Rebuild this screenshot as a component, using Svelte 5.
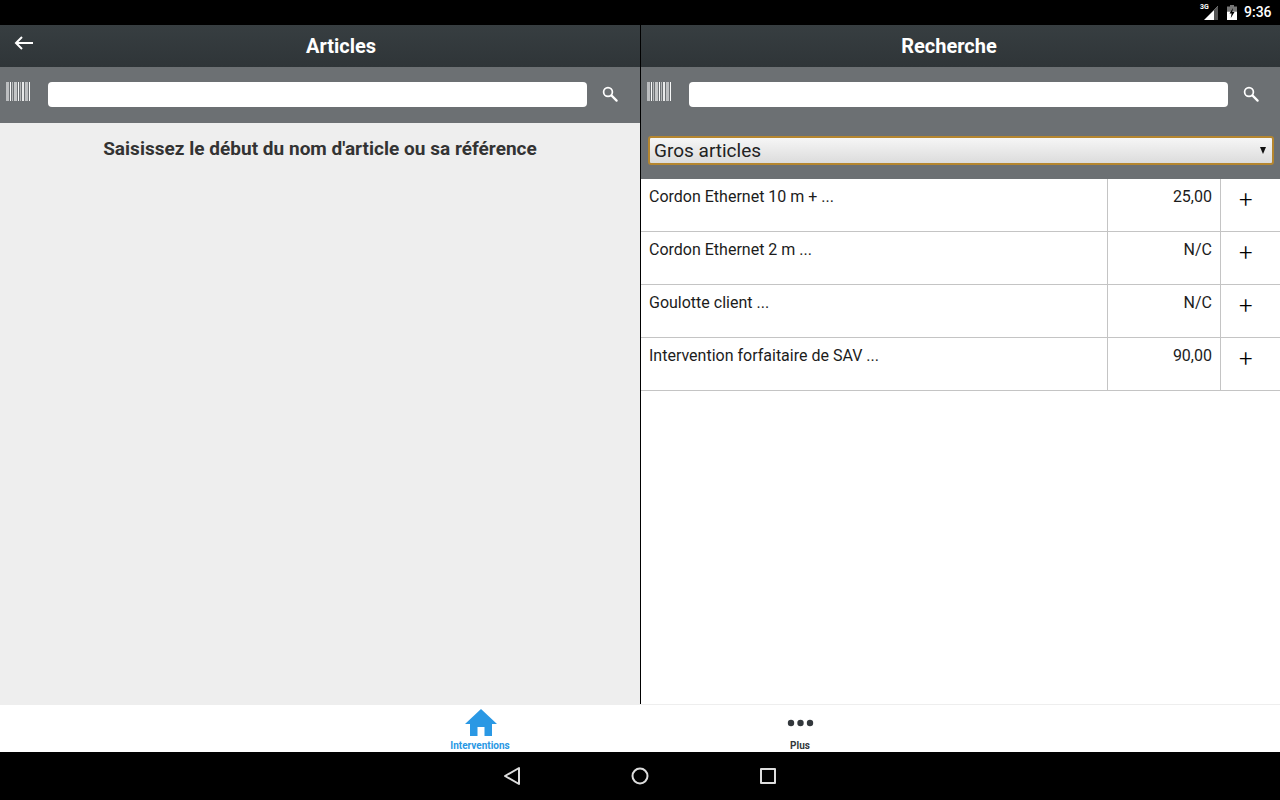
<script>
  const rows = [
    { name: 'Cordon Ethernet 10 m + ...', price: '25,00' },
    { name: 'Cordon Ethernet 2 m ...', price: 'N/C' },
    { name: 'Goulotte client ...', price: 'N/C' },
    { name: 'Intervention forfaitaire de SAV ...', price: '90,00' }
  ]
  // barcode strokes: offset, width, strength
  const barcode = [
    [0, 3, 0.55], [4, 1, 0.95], [6, 1, 0.5], [8, 3, 0.6], [12, 1, 0.95],
    [14, 1, 0.5], [16, 2, 0.85], [19, 3, 0.55], [23, 1, 0.95]
  ]
</script>

{#snippet scan()}
  <svg class="scan" width="25" height="19" viewBox="0 0 25 19">
    {#each barcode as [x, w, o]}
      <rect {x} y="0" width={w} height="19" fill="#fff" opacity={o} />
    {/each}
  </svg>
{/snippet}

{#snippet loupe()}
  <svg class="loupe" width="16" height="16" viewBox="0 0 16 16" fill="none" stroke="#fff">
    <circle cx="6" cy="6" r="4.4" stroke-width="1.7" />
    <path d="M9.4 9.4L14.6 14.6" stroke-width="2.2" stroke-linecap="round" />
  </svg>
{/snippet}

{#snippet searchbar()}
  <div class="search">
    {@render scan()}
    <div class="field"></div>
    {@render loupe()}
  </div>
{/snippet}

<div class="screen">
  <div class="status">
    <div class="net">
      <span class="tag">3G</span>
      <svg width="14" height="14" viewBox="0 0 14 14"><path d="M14 0V14H0Z" fill="#fff" /><path d="M14 0V14H10V4Z" fill="#555" /></svg>
    </div>
    <svg class="batt" width="10" height="15" viewBox="0 0 10 15">
      <rect x="3" y="0" width="4" height="2" fill="#777" />
      <rect x="0" y="1.500" width="10" height="5" fill="#777" />
      <rect x="0" y="6.500" width="10" height="8.500" fill="#fff" />
      <path d="M6 3L2.500 8.500H4.600L3.800 13L7.500 7H5.200Z" fill="#000" />
    </svg>
    <span class="clock">9:36</span>
  </div>

  <div class="panels">
    <section class="panel left">
      <header class="head">
        <svg class="back" width="20" height="14" viewBox="0 0 20 14" fill="none" stroke="#fff" stroke-width="2">
          <path d="M19 7H2" />
          <path d="M8 1L2 7L8 13" />
        </svg>
        <h1>Articles</h1>
      </header>
      {@render searchbar()}
      <p class="hint">Saisissez le début du nom d'article ou sa référence</p>
    </section>

    <section class="panel right">
      <header class="head"><h1>Recherche</h1></header>
      <div class="tools">
        {@render searchbar()}
        <div class="selectwrap">
          <div class="select">
            <span>Gros articles</span>
            <span class="caret"></span>
          </div>
        </div>
      </div>
      <div class="list">
        {#each rows as row}
          <div class="row">
            <div class="name">{row.name}</div>
            <div class="price">{row.price}</div>
            <div class="add">+</div>
          </div>
        {/each}
      </div>
    </section>
  </div>

  <nav class="tabs">
    <div class="tab active">
      <svg width="32" height="27" viewBox="0 0 32 27">
        <path d="M16 0L32 15H27V27H19.500V18H12.500V27H5V15H0Z" fill="#2a98e4" />
      </svg>
      <span>Interventions</span>
    </div>
    <div class="tab">
      <svg width="32" height="27" viewBox="0 0 32 27" fill="#33383c">
        <circle cx="7" cy="14" r="3.200" />
        <circle cx="16.500" cy="14" r="3.200" />
        <circle cx="26" cy="14" r="3.200" />
      </svg>
      <span>Plus</span>
    </div>
  </nav>

  <div class="sysnav">
    <svg width="18" height="20" viewBox="0 0 18 20" fill="none" stroke="#ddd" stroke-width="2" stroke-linejoin="round"><path d="M16 2V18L2 10Z" /></svg>
    <svg width="18" height="18" viewBox="0 0 18 18" fill="none" stroke="#ddd" stroke-width="2"><circle cx="9" cy="9" r="7.500" /></svg>
    <svg width="18" height="18" viewBox="0 0 18 18" fill="none" stroke="#ddd" stroke-width="2" stroke-linejoin="round"><rect x="2" y="2" width="14" height="14" /></svg>
  </div>
</div>

<style>
  :global(body) { margin: 0; }
  .screen { width: 1280px; height: 800px; display: flex; flex-direction: column; font-family: Roboto, "Liberation Sans", sans-serif; overflow: hidden; background: #fff; }

  .status { height: 25px; background: #000; display: flex; align-items: center; justify-content: flex-end; box-sizing: border-box; padding-right: 8px; }
  .net { position: relative; width: 18px; height: 16px; display: flex; align-items: flex-end; justify-content: flex-end; margin-right: 9px; }
  .tag { position: absolute; left: 0; top: -1px; font-size: 7px; font-weight: 700; color: #fff; line-height: 9px; }
  .batt { margin-right: 7px; }
  .clock { color: #fff; font-size: 14px; font-weight: 500; width: 28px; }

  .panels { height: 680px; display: flex; }
  .panel { display: flex; flex-direction: column; box-sizing: border-box; }
  .left { width: 641px; background: #eee; border-right: 1px solid #000; }
  .right { width: 639px; background: #fff; }

  .head { height: 42px; position: relative; display: flex; align-items: center; justify-content: center; background: linear-gradient(#373e41, #2f3538); }
  .head h1 { margin: 0; font-size: 20px; font-weight: 700; color: #fff; line-height: 42px; }
  .left .head h1 { margin-left: 42px; }
  .right .head h1 { margin-right: 23px; }
  .back { position: absolute; left: 14px; top: 11px; }

  .search { height: 56px; display: flex; align-items: flex-start; background: #6c7073; box-sizing: border-box; padding: 15px 14px 0 6px; }
  .tools { background: #6c7073; height: 112px; }
  .scan { margin-right: 17px; }
  .field { width: 539px; height: 25px; background: #fff; border-radius: 4px; }
  .loupe { margin: 4px 0 0 15px; }

  .hint { margin: 14px 0 0; text-align: center; font-size: 19px; font-weight: 700; letter-spacing: 0.02px; line-height: 24px; color: #333; }

  .selectwrap { padding: 13px 6px 0 7px; }
  .select { height: 29px; box-sizing: border-box; border: 2px solid #b5862f; border-radius: 3px; background: linear-gradient(#f6f6f6, #dcdcdc); display: flex; align-items: center; justify-content: space-between; padding: 0 6px 0 4px; font-size: 19px; color: #222; }
  .caret { width: 0; height: 0; border-left: 3.500px solid transparent; border-right: 3.500px solid transparent; border-top: 7px solid #111; }

  .row { height: 53px; display: grid; grid-template-columns: 466px 113px 60px; box-sizing: border-box; border-bottom: 1px solid #c4c4c4; font-size: 16px; color: #1c1c1c; }
  .name { padding: 9px 8px 0; line-height: 18px; }
  .price { padding: 9px 8px 0; text-align: right; line-height: 18px; border-left: 1px solid #c4c4c4; }
  .add { border-left: 1px solid #c4c4c4; font-size: 24px; font-weight: 300; line-height: 42px; padding-left: 18px; color: #000; }

  .tabs { height: 47px; display: flex; justify-content: center; background: #fff; border-top: 1px solid #eee; }
  .tab { width: 320px; display: flex; flex-direction: column; align-items: center; padding-top: 4px; box-sizing: border-box; }
  .tab span { font-size: 10px; font-weight: 700; line-height: 12px; color: #33383c; margin-top: 4px; }
  .tab.active span { color: #2a98e4; }
  .tab.active svg { margin-left: 2px; }

  .sysnav { height: 48px; background: #000; display: flex; align-items: center; justify-content: center; gap: 110px; }
</style>
